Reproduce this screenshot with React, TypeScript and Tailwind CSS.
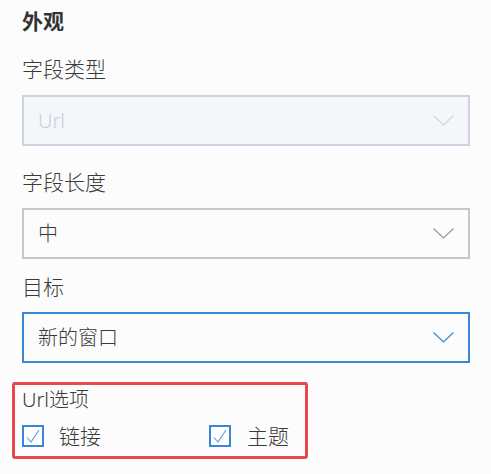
import React from "react";

const Chevron = ({ color }: { color: string }) => (
  <svg width="21" height="11" viewBox="0 0 21 11" fill="none">
    <path d="M0.5 0.5 L10.5 10 L20.5 0.5" stroke={color} strokeWidth="1.2" />
  </svg>
);

const Check = () => (
  <div className="w-[22px] h-[22px] border-2 border-[#3a86d8] bg-white flex items-center justify-center shrink-0">
    <svg width="18" height="18" viewBox="0 0 18 18" fill="none">
      <path d="M3 10.5 L7 15 L15 3" stroke="#5b9ee4" strokeWidth="1.1" />
    </svg>
  </div>
);

const Select = ({
  text,
  variant,
}: {
  text: string;
  variant: "disabled" | "normal" | "active";
}) => {
  const cls =
    variant === "disabled"
      ? "border-[#cdd3e1] bg-[#f4f6fa] text-[#c9cfdd]"
      : variant === "active"
      ? "border-[#3a86d8] bg-[#fcfcfc] text-[#3a3a3a]"
      : "border-[#c8c8cc] bg-[#fcfcfc] text-[#3a3a3a]";
  const chev =
    variant === "disabled" ? "#cfd4df" : variant === "active" ? "#3a86d8" : "#9a9a9e";
  return (
    <div className={`h-[51px] border-2 flex items-center justify-between pl-[14px] pr-[14px] ${cls}`}>
      <span className="text-[20px] leading-[28px] font-light">{text}</span>
      <Chevron color={chev} />
    </div>
  );
};

export default function App() {
  return (
    <div
      className="w-[491px] h-[474px] bg-[#fcfcfc] text-[#3a3a3a] pl-[22px] pr-[21px] pt-[7px] overflow-hidden"
      style={{ fontFamily: '"Noto Sans", "Noto Sans CJK SC", sans-serif' }}
    >
      <div className="text-[21px] leading-[28px] font-bold text-[#333]">外观</div>
      <div className="text-[21px] leading-[28px] mt-[20px] font-light">字段类型</div>
      <div className="mt-[12px]">
        <Select text="Url" variant="disabled" />
      </div>
      <div className="text-[21px] leading-[28px] mt-[22px] font-light">字段长度</div>
      <div className="mt-[12px]">
        <Select text="中" variant="normal" />
      </div>
      <div className="text-[21px] leading-[28px] mt-[14px] font-light">目标</div>
      <div className="mt-[11px]">
        <Select text="新的窗口" variant="active" />
      </div>
      <div className="ml-[-10px] mt-[19px] w-[296px] border-[3px] border-[#e8474b] rounded-[3px] pl-[7px] pt-[1px] pb-[6px]">
        <div className="text-[20px] leading-[28px] font-light">Url选项</div>
        <div className="flex items-center mt-[8px]">
          <div className="w-[187px] flex items-center gap-[15px]">
            <Check />
            <span className="text-[21px] leading-[28px] font-light">链接</span>
          </div>
          <div className="flex items-center gap-[16px]">
            <Check />
            <span className="text-[21px] leading-[28px] font-light">主题</span>
          </div>
        </div>
      </div>
    </div>
  );
}
